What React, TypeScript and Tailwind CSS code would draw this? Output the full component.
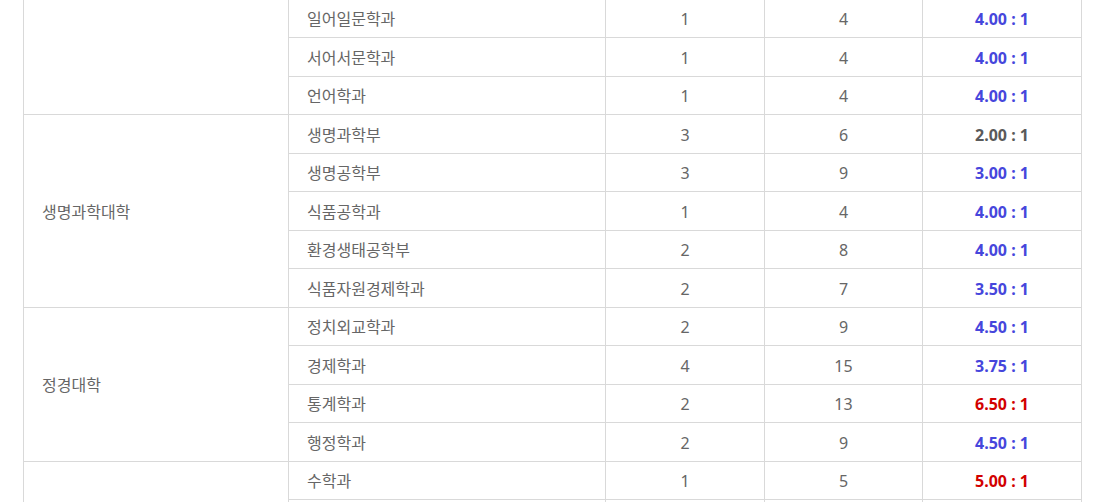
const FONT = 'font-["Noto_Sans","Noto_Sans_CJK_KR",sans-serif]';

type Row = { dept: string; quota: number; applied: number; ratio: string; tone: 'blue' | 'red' | 'gray' };
type Group = { college: string; rows: Row[] };

const GROUPS: Group[] = [
    {
        college: '',
        rows: [
            { dept: '일어일문학과', quota: 1, applied: 4, ratio: '4.00 : 1', tone: 'blue' },
            { dept: '서어서문학과', quota: 1, applied: 4, ratio: '4.00 : 1', tone: 'blue' },
            { dept: '언어학과', quota: 1, applied: 4, ratio: '4.00 : 1', tone: 'blue' },
        ],
    },
    {
        college: '생명과학대학',
        rows: [
            { dept: '생명과학부', quota: 3, applied: 6, ratio: '2.00 : 1', tone: 'gray' },
            { dept: '생명공학부', quota: 3, applied: 9, ratio: '3.00 : 1', tone: 'blue' },
            { dept: '식품공학과', quota: 1, applied: 4, ratio: '4.00 : 1', tone: 'blue' },
            { dept: '환경생태공학부', quota: 2, applied: 8, ratio: '4.00 : 1', tone: 'blue' },
            { dept: '식품자원경제학과', quota: 2, applied: 7, ratio: '3.50 : 1', tone: 'blue' },
        ],
    },
    {
        college: '정경대학',
        rows: [
            { dept: '정치외교학과', quota: 2, applied: 9, ratio: '4.50 : 1', tone: 'blue' },
            { dept: '경제학과', quota: 4, applied: 15, ratio: '3.75 : 1', tone: 'blue' },
            { dept: '통계학과', quota: 2, applied: 13, ratio: '6.50 : 1', tone: 'red' },
            { dept: '행정학과', quota: 2, applied: 9, ratio: '4.50 : 1', tone: 'blue' },
        ],
    },
    {
        college: '이과대학',
        rows: [
            { dept: '수학과', quota: 1, applied: 5, ratio: '5.00 : 1', tone: 'red' },
            { dept: '물리학과', quota: 1, applied: 3, ratio: '3.00 : 1', tone: 'blue' },
            { dept: '화학과', quota: 1, applied: 4, ratio: '4.00 : 1', tone: 'blue' },
            { dept: '지구환경과학과', quota: 1, applied: 3, ratio: '3.00 : 1', tone: 'blue' },
        ],
    },
];

const TONE = {
    blue: 'text-[#4646dc]',
    red: 'text-[#d20000]',
    gray: 'text-[#5a5a5a]',
};

const CELL = 'pt-[2px] flex items-center';

function DeptRow({ row }: { row: Row }) {
    return (
        <div className="flex h-[38.5px] border-b border-[#d9d9d9]">
            <div className={`w-[317px] border-r border-[#d9d9d9] pl-[18px] ${CELL}`}>{row.dept}</div>
            <div className={`w-[159px] border-r border-[#d9d9d9] justify-center ${CELL}`}>{row.quota}</div>
            <div className={`w-[158px] border-r border-[#d9d9d9] justify-center ${CELL}`}>{row.applied}</div>
            <div className={`w-[158px] justify-center font-bold ${CELL} ${TONE[row.tone]}`}>{row.ratio}</div>
        </div>
    );
}

export default function App() {
    return (
        <div className={`bg-white w-[1095px] h-[502px] overflow-hidden text-[16px] text-[#666666] ${FONT}`}>
            <div className="ml-[23px] -mt-[0.5px] w-[1059px] border-x border-[#d9d9d9]">
                {GROUPS.map(g => (
                    <div key={g.college + g.rows[0].dept} className="flex">
                        <div className={`w-[265px] shrink-0 border-r border-b border-[#d9d9d9] pl-[18px] ${CELL}`}>
                            {g.college}
                        </div>
                        <div className="flex-1 flex flex-col">
                            {g.rows.map(r => (
                                <DeptRow key={r.dept} row={r} />
                            ))}
                        </div>
                    </div>
                ))}
            </div>
        </div>
    );
}
